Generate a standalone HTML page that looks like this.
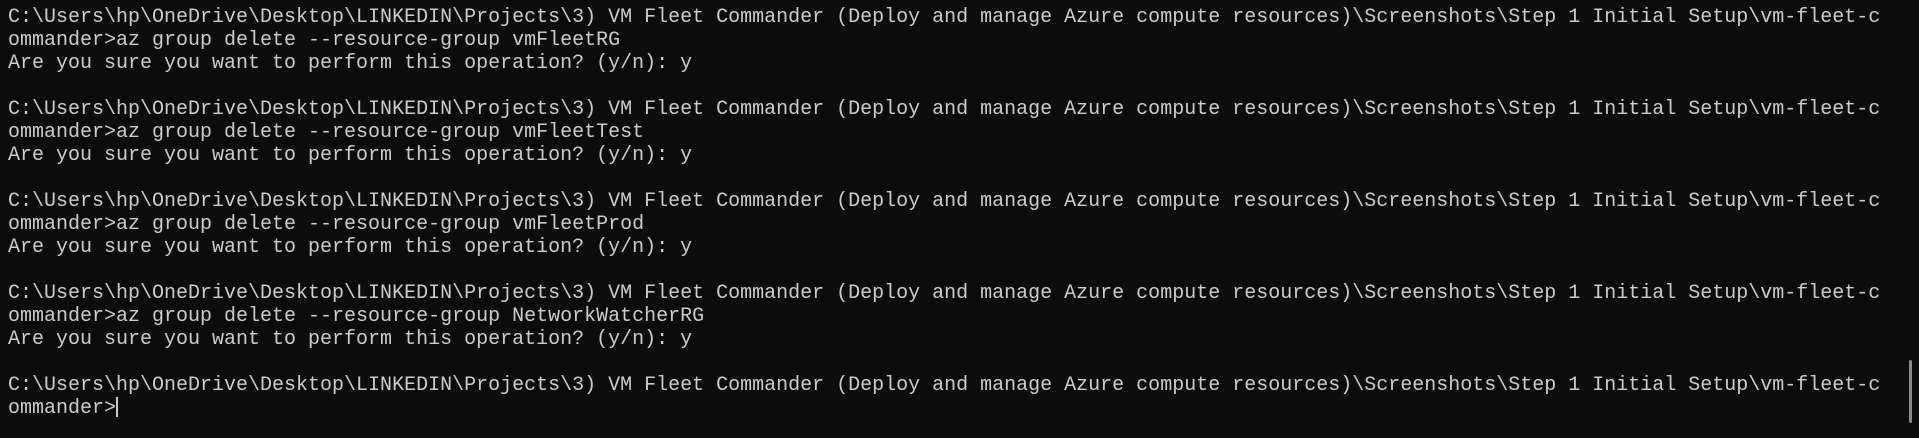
<!DOCTYPE html>
<html><head><style>
html,body{margin:0;padding:0;background:#0c0c0c;width:1919px;height:438px;overflow:hidden}
pre{margin:0;position:absolute;left:8px;top:6px;font-family:"Liberation Mono",monospace;font-size:20px;line-height:23px;color:#cccccc;white-space:pre}
.cur{display:inline-block;width:2px;height:20px;background:#cccccc;vertical-align:-4px}
.sb{position:absolute;left:1909px;top:360px;width:3px;height:63px;background:#8a8a8a;border-radius:2px}
</style></head><body>
<pre>C:\Users\hp\OneDrive\Desktop\LINKEDIN\Projects\3) VM Fleet Commander (Deploy and manage Azure compute resources)\Screenshots\Step 1 Initial Setup\vm-fleet-c
ommander&gt;az group delete --resource-group vmFleetRG
Are you sure you want to perform this operation? (y/n): y

C:\Users\hp\OneDrive\Desktop\LINKEDIN\Projects\3) VM Fleet Commander (Deploy and manage Azure compute resources)\Screenshots\Step 1 Initial Setup\vm-fleet-c
ommander&gt;az group delete --resource-group vmFleetTest
Are you sure you want to perform this operation? (y/n): y

C:\Users\hp\OneDrive\Desktop\LINKEDIN\Projects\3) VM Fleet Commander (Deploy and manage Azure compute resources)\Screenshots\Step 1 Initial Setup\vm-fleet-c
ommander&gt;az group delete --resource-group vmFleetProd
Are you sure you want to perform this operation? (y/n): y

C:\Users\hp\OneDrive\Desktop\LINKEDIN\Projects\3) VM Fleet Commander (Deploy and manage Azure compute resources)\Screenshots\Step 1 Initial Setup\vm-fleet-c
ommander&gt;az group delete --resource-group NetworkWatcherRG
Are you sure you want to perform this operation? (y/n): y

C:\Users\hp\OneDrive\Desktop\LINKEDIN\Projects\3) VM Fleet Commander (Deploy and manage Azure compute resources)\Screenshots\Step 1 Initial Setup\vm-fleet-c
ommander&gt;<span class="cur"></span></pre>
<div class="sb"></div>
</body></html>
